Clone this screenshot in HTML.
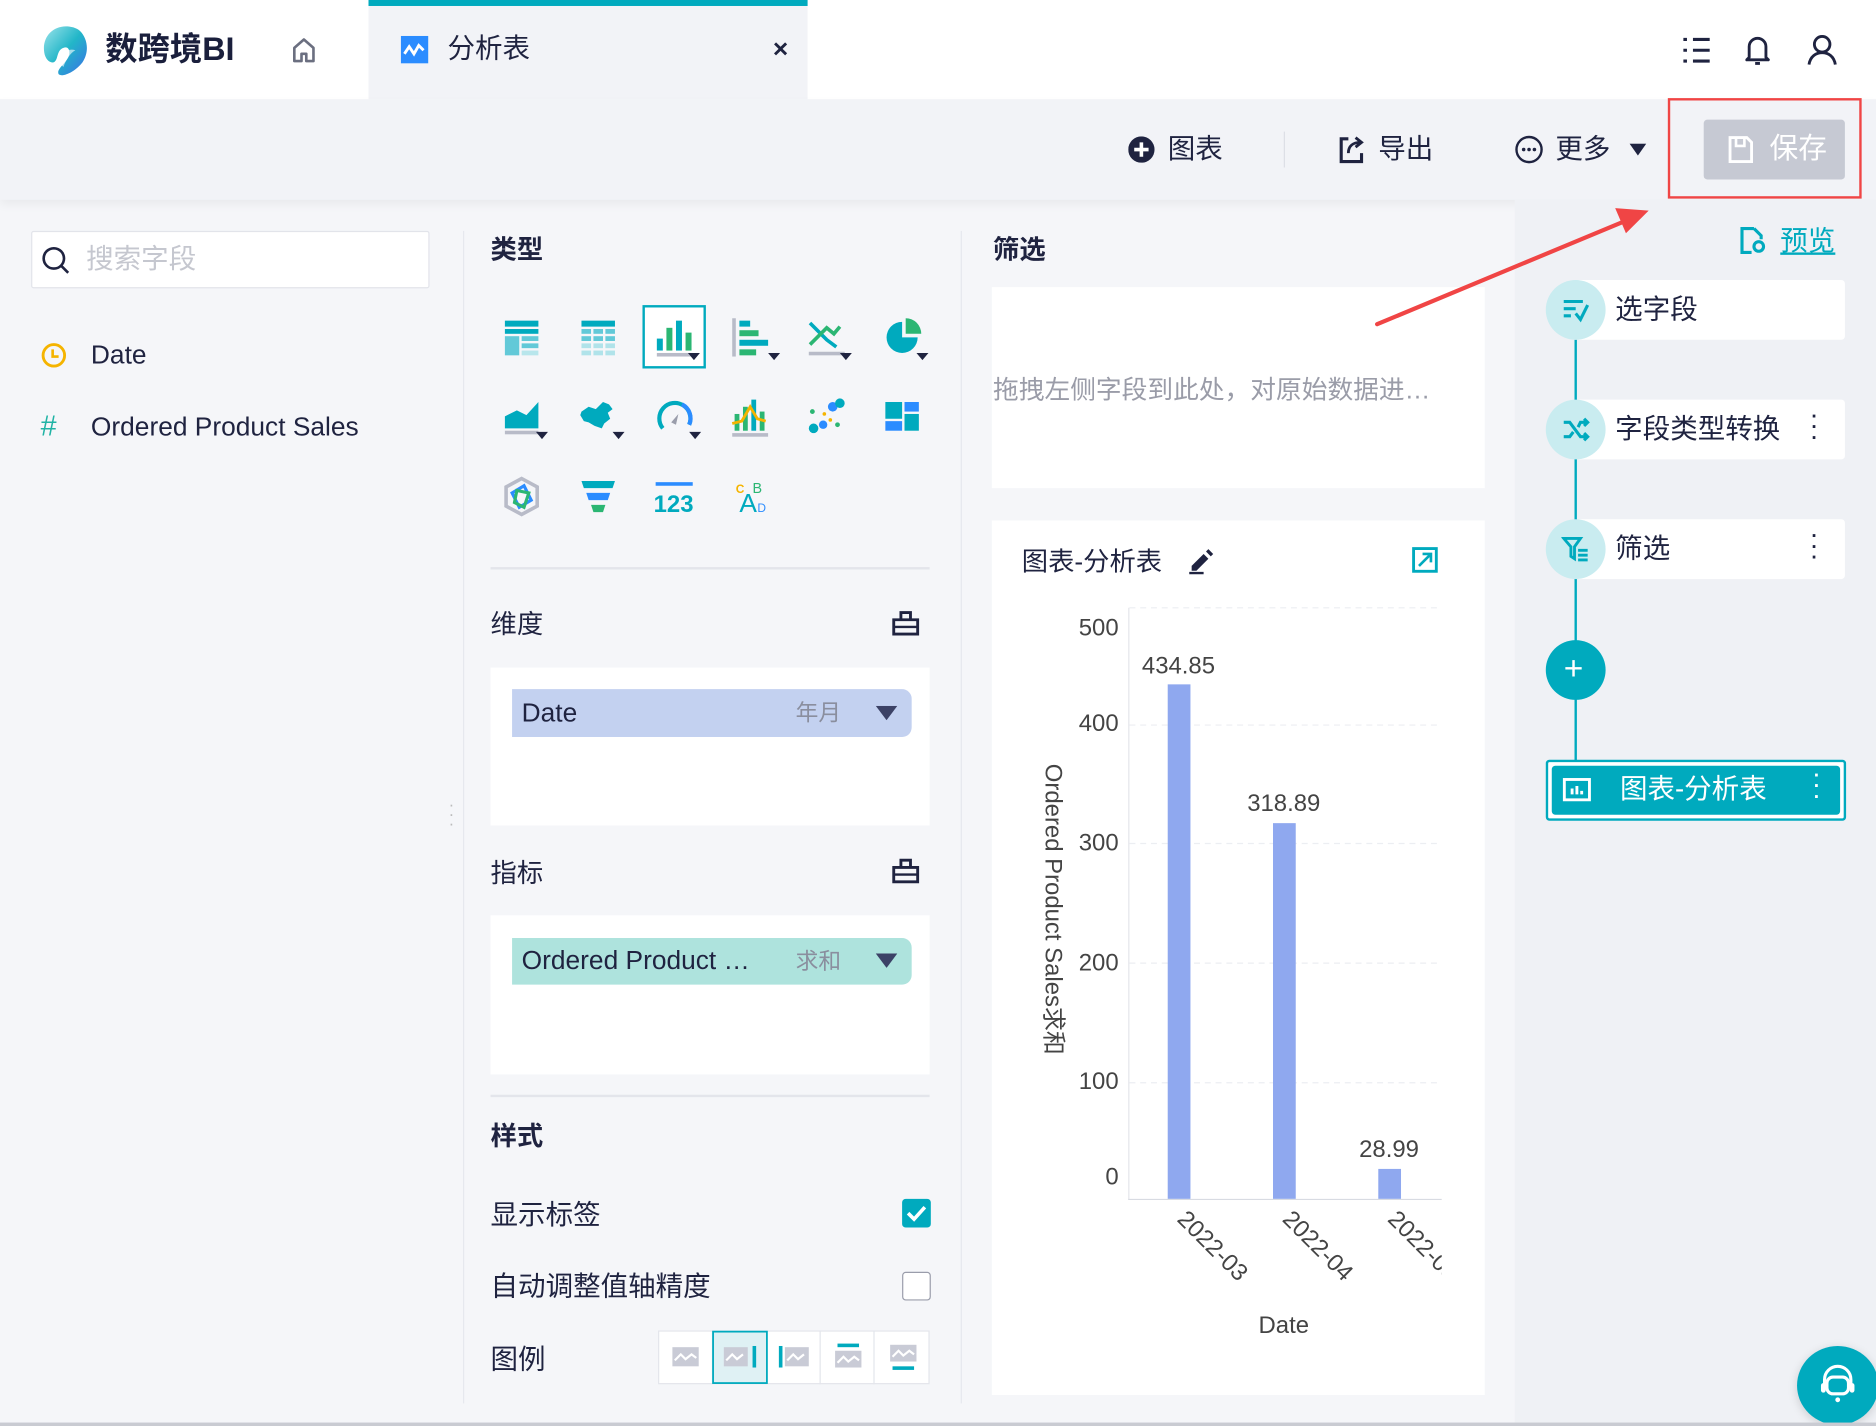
<!DOCTYPE html>
<html><head><meta charset="utf-8"><style>
*{box-sizing:border-box;margin:0;padding:0}
html,body{width:1876px;height:1426px;overflow:hidden;background:#f5f6f9}
body{font-family:"Liberation Sans","Noto Sans CJK SC",sans-serif;color:#1f2340}
#w{position:absolute;left:0;top:0;width:1568px;height:1192px;transform:scale(1.19643);transform-origin:0 0;background:#f5f6f9;overflow:hidden}
.a{position:absolute}
.t{position:absolute;white-space:nowrap;line-height:1}
</style></head><body><div id="w">
<!-- top bar -->
<div class="a" style="left:0;top:0;width:1568px;height:83px;background:#fff"></div>
<svg class="a" style="left:33px;top:20px" width="46" height="44" viewBox="0 0 46 44"><defs><linearGradient id="lg" x1="0" y1="0" x2="1" y2="1"><stop offset="0" stop-color="#9be3ea"/><stop offset=".5" stop-color="#22b6c8"/><stop offset="1" stop-color="#3a6fe6"/></linearGradient></defs><path d="M22 2C10 2 2 12 4 24c1 6 5 9 8 8 4-2 2-10 8-12 5-2 6 4 4 8-3 6-10 10-8 14 3 3 14-2 20-10 6-9 4-20-2-26-3-3-8-4-12-4z" fill="url(#lg)"/><path d="M14 30c4-6 10-10 16-8-4 2-8 8-10 14z" fill="#fff" opacity=".6"/></svg>
<div class="t" style="left:88px;top:28px;font-size:27px;font-weight:bold;color:#1a1f3c">数跨境BI</div>
<svg class="a" style="left:242px;top:30px" width="24" height="24" viewBox="0 0 24 24"><path d="M4 21V10l8-7 8 7v11h-6v-6h-4v6z" fill="none" stroke="#6b6f80" stroke-width="2.2" stroke-linejoin="round"/></svg>
<div class="a" style="left:308px;top:0;width:367px;height:83px;background:#f2f3f7"></div>
<div class="a" style="left:308px;top:0;width:367px;height:5px;background:#00aabe"></div>
<svg class="a" style="left:335px;top:30px" width="23" height="23" viewBox="0 0 23 23"><rect width="23" height="23" fill="#2b8cff"/><path d="M3 15l4-6 4 6 4-7 4 4" fill="none" stroke="#fff" stroke-width="2.4"/></svg>
<div class="t" style="left:374px;top:29px;font-size:23px">分析表</div>
<div class="t" style="left:646px;top:30px;font-size:22px;font-weight:bold">×</div>
<svg class="a" style="left:1405px;top:29px" width="26" height="26" viewBox="0 0 26 26"><g stroke="#1f2340" stroke-width="2.6"><path d="M10 4h14M10 13h14M10 22h14"/><path d="M2 4h3M2 13h3M2 22h3"/></g></svg>
<svg class="a" style="left:1457px;top:28px" width="24" height="28" viewBox="0 0 24 28"><path d="M5 20V11a7 7 0 0114 0v9l2 2H3z" fill="none" stroke="#1f2340" stroke-width="2.4" stroke-linejoin="round"/><path d="M10 25h4" stroke="#1f2340" stroke-width="2.4"/></svg>
<svg class="a" style="left:1510px;top:28px" width="26" height="28" viewBox="0 0 26 28"><circle cx="13" cy="9" r="6.5" fill="none" stroke="#1f2340" stroke-width="2.4"/><path d="M2 26c1-7 6-10 11-10s10 3 11 10" fill="none" stroke="#1f2340" stroke-width="2.4"/></svg>
<!-- toolbar -->
<div class="a" style="left:0;top:83px;width:1568px;height:84px;background:#f2f3f7;box-shadow:0 4px 8px rgba(0,0,0,.05)"></div>
<svg class="a" style="left:943px;top:114px" width="22" height="22" viewBox="0 0 22 22"><circle cx="11" cy="11" r="11" fill="#1f2340"/><path d="M11 5v12M5 11h12" stroke="#fff" stroke-width="3"/></svg>
<div class="t" style="left:976px;top:113px;font-size:23px">图表</div>
<div class="a" style="left:1073px;top:110px;width:1px;height:30px;background:#dcdee6"></div>
<svg class="a" style="left:1118px;top:113px" width="24" height="24" viewBox="0 0 24 24"><path d="M9 3H3v19h17v-7" fill="none" stroke="#1f2340" stroke-width="2.6"/><path d="M9 15c0-6 4-9 10-9M15 2l5 4-5 4" fill="none" stroke="#1f2340" stroke-width="2.4"/></svg>
<div class="t" style="left:1152px;top:113px;font-size:23px">导出</div>
<svg class="a" style="left:1266px;top:113px" width="24" height="24" viewBox="0 0 24 24"><circle cx="12" cy="12" r="10.5" fill="none" stroke="#1f2340" stroke-width="2"/><circle cx="7.5" cy="12" r="1.5" fill="#1f2340"/><circle cx="12" cy="12" r="1.5" fill="#1f2340"/><circle cx="16.5" cy="12" r="1.5" fill="#1f2340"/></svg>
<div class="t" style="left:1300px;top:113px;font-size:23px">更多</div>
<svg class="a" style="left:1362px;top:120px" width="14" height="10"><path d="M0 0h14L7 10z" fill="#1f2340"/></svg>
<div class="a" style="left:1424px;top:100px;width:118px;height:50px;background:#c6c9d3;border-radius:3px"></div>
<svg class="a" style="left:1444px;top:113px" width="22" height="24" viewBox="0 0 22 24"><path d="M2 2h14l4 4v16H2z" fill="none" stroke="#fff" stroke-width="2.4"/><path d="M7 3v6h7V3" fill="none" stroke="#fff" stroke-width="2.2"/></svg>
<div class="t" style="left:1479px;top:113px;font-size:24px;color:#fff">保存</div>
<div class="a" style="left:1394px;top:82px;width:162px;height:84px;border:2.5px solid #f04545"></div>
<!-- left panel -->
<div class="a" style="left:26px;top:193px;width:333px;height:48px;background:#fff;border:1.5px solid #e2e4ea;border-radius:2px"></div>
<svg class="a" style="left:34px;top:205px" width="26" height="26" viewBox="0 0 26 26"><circle cx="11" cy="11" r="8.5" fill="none" stroke="#1f2340" stroke-width="2.2"/><path d="M17 17l6 6" stroke="#1f2340" stroke-width="2.2"/></svg>
<div class="t" style="left:72px;top:205px;font-size:23px;color:#c5c7cf">搜索字段</div>
<svg class="a" style="left:34px;top:286px" width="22" height="22" viewBox="0 0 22 22"><circle cx="11" cy="11" r="9" fill="none" stroke="#f5b400" stroke-width="2.4"/><path d="M10 6v6h5" fill="none" stroke="#f5b400" stroke-width="2.2"/></svg>
<div class="t" style="left:76px;top:286px;font-size:22px">Date</div>
<div class="t" style="left:34px;top:345px;font-size:24px;color:#20b3a5">#</div>
<div class="t" style="left:76px;top:346px;font-size:22px">Ordered Product Sales</div>
<div class="a" style="left:387px;top:193px;width:1px;height:980px;background:#e6e8ee"></div>
<div class="t" style="left:375px;top:668px;font-size:14px;color:#bbb;line-height:8px;width:4px">·<br>·<br>·</div>
<!-- middle config -->
<div class="t" style="left:410px;top:198px;font-size:22px;font-weight:bold">类型</div>
<div class="a" style="left:537px;top:255px;width:53px;height:53px;background:#fff;border:2px solid #00aabe"></div>
<svg class="a" style="left:400px;top:250px" width="400" height="190" viewBox="0 0 400 190">
<g transform="translate(22,18)"><rect x="0" y="0" width="28" height="5" fill="#00aabe"/><rect x="0" y="7" width="28" height="4" fill="#00aabe"/><rect x="0" y="13" width="12" height="16" fill="#62c9d8"/><rect x="14" y="13" width="14" height="4" fill="#62c9d8"/><rect x="14" y="19" width="14" height="4" fill="#62c9d8"/><rect x="14" y="25" width="14" height="4" fill="#b8e6ec"/></g>
<g transform="translate(86,18)"><rect x="0" y="0" width="28" height="5" fill="#00aabe"/><g fill="#62c9d8"><rect x="0" y="7" width="8" height="4"/><rect x="10" y="7" width="8" height="4"/><rect x="20" y="7" width="8" height="4"/><rect x="0" y="13" width="8" height="4"/><rect x="10" y="13" width="8" height="4"/><rect x="20" y="13" width="8" height="4"/></g><g fill="#b0e3ea"><rect x="0" y="19" width="8" height="4"/><rect x="10" y="19" width="8" height="4"/><rect x="20" y="19" width="8" height="4"/><rect x="0" y="25" width="8" height="4"/><rect x="10" y="25" width="8" height="4"/><rect x="20" y="25" width="8" height="4"/></g></g>
<g transform="translate(149,16)"><rect x="0" y="17" width="5" height="10" fill="#00aabe"/><rect x="8" y="8" width="5" height="19" fill="#2bb673"/><rect x="16" y="2" width="5" height="25" fill="#00aabe"/><rect x="24" y="12" width="5" height="15" fill="#2bb673"/><rect x="0" y="29" width="30" height="3" fill="#b8bbc8"/><path d="M26 29h10l-5 6z" fill="#1f2340"/></g>
<g transform="translate(212,16)"><rect x="0" y="0" width="3" height="32" fill="#b8bbc8"/><rect x="6" y="2" width="9" height="5" fill="#00aabe"/><rect x="6" y="10" width="16" height="5" fill="#2bb673"/><rect x="6" y="18" width="24" height="5" fill="#00aabe"/><rect x="6" y="26" width="14" height="5" fill="#2bb673"/><path d="M30 29h10l-5 6z" fill="#1f2340"/></g>
<g transform="translate(276,16)"><path d="M1 4l14 14 8 6" fill="none" stroke="#00aabe" stroke-width="3"/><path d="M1 22l14-14 6 5 5-6" fill="none" stroke="#2bb673" stroke-width="3"/><rect x="0" y="28" width="30" height="3" fill="#b8bbc8"/><path d="M26 29h10l-5 6z" fill="#1f2340"/></g>
<g transform="translate(340,16)"><path d="M14 3A13 13 0 1 0 27 16H14z" fill="#00aabe"/><path d="M17 0a13 13 0 0 1 13 13H17z" fill="#2bb673"/><path d="M26 29h10l-5 6z" fill="#1f2340"/></g>
<g transform="translate(22,84)"><path d="M0 14l10-5 8 4 10-11v22H0z" fill="#00aabe"/><rect x="0" y="26" width="28" height="3" fill="#b8bbc8"/><path d="M26 27h10l-5 6z" fill="#1f2340"/></g>
<g transform="translate(86,84)"><path d="M0 10l6-4 6 2 6-6 5 2 3 4-4 3 2 5-5 4-2 4-6-2-5-3-4-1-3-5z" fill="#00aabe"/><path d="M26 27h10l-5 6z" fill="#1f2340"/></g>
<g transform="translate(150,84)"><path d="M4 24A13 13 0 1 1 26 21" fill="none" stroke="#00aabe" stroke-width="3.5"/><path d="M20 4A13 13 0 0 1 26 21" fill="none" stroke="#2b8cff" stroke-width="3.5"/><path d="M11 19l6-7-2 9z" fill="#9a9dab"/><path d="M26 27h10l-5 6z" fill="#1f2340"/></g>
<g transform="translate(212,84)"><rect x="2" y="12" width="4" height="14" fill="#2bb673"/><rect x="9" y="6" width="4" height="20" fill="#2bb673"/><rect x="16" y="0" width="4" height="26" fill="#00aabe"/><rect x="23" y="10" width="4" height="16" fill="#2bb673"/><path d="M0 20l8-2 7-12 6 10 7 2" fill="none" stroke="#f5b400" stroke-width="2.4"/><rect x="0" y="28" width="30" height="3" fill="#b8bbc8"/></g>
<g transform="translate(276,84)"><circle cx="4" cy="24" r="4" fill="#00aabe"/><circle cx="12" cy="21" r="3.5" fill="#2b8cff"/><circle cx="20" cy="6" r="4" fill="#2b8cff"/><circle cx="26" cy="3" r="4" fill="#00aabe"/><circle cx="3" cy="10" r="2" fill="#2bb673"/><circle cx="13" cy="12" r="1.5" fill="#f5b400"/><circle cx="18" cy="17" r="1.5" fill="#f5b400"/><circle cx="24" cy="21" r="2" fill="#2bb673"/></g>
<g transform="translate(340,86)"><rect x="0" y="0" width="14" height="14" fill="#00aabe"/><rect x="16" y="0" width="12" height="8" fill="#2b8cff"/><rect x="0" y="16" width="14" height="8" fill="#2b8cff"/><rect x="16" y="10" width="12" height="14" fill="#00aabe"/></g>
<g transform="translate(22,150)"><path d="M14 0l13 7v16l-13 7-13-7V7z" fill="none" stroke="#b8bbc8" stroke-width="3"/><path d="M6 12l10-6 6 12-10 6z" fill="none" stroke="#2b8cff" stroke-width="2.6"/><path d="M10 10l10 2-4 12-8-4z" fill="none" stroke="#2bb673" stroke-width="2.6"/></g>
<g transform="translate(86,152)"><path d="M0 0h28l-2 6H2z" fill="#00aabe"/><path d="M4 10h20l-2 6H6z" fill="#2b8cff"/><path d="M8 20h12l-2 6h-8z" fill="#2bb673"/></g>
<text x="163" y="178" font-family="Liberation Sans" font-weight="bold" font-size="20" fill="#00aabe" text-anchor="middle">123</text><rect x="148" y="153" width="31" height="3" fill="#2b8cff"/>
<text x="215" y="162" font-family="Liberation Sans" font-weight="bold" font-size="10" fill="#f5b400">C</text><text x="218" y="178" font-family="Liberation Sans" font-size="22" fill="#00aabe">A</text><text x="229" y="162" font-family="Liberation Sans" font-size="12" fill="#2bb673">B</text><text x="233" y="178" font-family="Liberation Sans" font-size="10" fill="#2b8cff">D</text>
</svg>
<div class="a" style="left:410px;top:474px;width:367px;height:1.5px;background:#e3e5eb"></div>
<div class="t" style="left:410px;top:511px;font-size:22px">维度</div>
<svg class="a" style="left:745px;top:509px" width="24" height="24" viewBox="0 0 24 24"><path d="M2 9h20v12H2zM8 9V3h8v6" fill="none" stroke="#1f2340" stroke-width="2.4"/><path d="M2 15h20" stroke="#1f2340" stroke-width="2"/></svg>
<div class="a" style="left:410px;top:558px;width:367px;height:132px;background:#fff"></div>
<div class="a" style="left:428px;top:576px;width:334px;height:40px;background:#c3d1f0;border-radius:0 8px 8px 0"></div>
<div class="t" style="left:436px;top:585px;font-size:22px">Date</div>
<div class="t" style="left:665px;top:587px;font-size:19px;color:#8a8e9e">年月</div>
<svg class="a" style="left:732px;top:590px" width="18" height="12"><path d="M0 0h18L9 12z" fill="#3c4266"/></svg>
<div class="t" style="left:410px;top:719px;font-size:22px">指标</div>
<svg class="a" style="left:745px;top:716px" width="24" height="24" viewBox="0 0 24 24"><path d="M2 9h20v12H2zM8 9V3h8v6" fill="none" stroke="#1f2340" stroke-width="2.4"/><path d="M2 15h20" stroke="#1f2340" stroke-width="2"/></svg>
<div class="a" style="left:410px;top:765px;width:367px;height:133px;background:#fff"></div>
<div class="a" style="left:428px;top:784px;width:334px;height:39px;background:#aee3dd;border-radius:0 8px 8px 0"></div>
<div class="t" style="left:436px;top:792px;font-size:22px">Ordered Product …</div>
<div class="t" style="left:665px;top:795px;font-size:19px;color:#8a8e9e">求和</div>
<svg class="a" style="left:732px;top:797px" width="18" height="12"><path d="M0 0h18L9 12z" fill="#3c4266"/></svg>
<div class="a" style="left:410px;top:915px;width:367px;height:1.5px;background:#e3e5eb"></div>
<div class="t" style="left:410px;top:939px;font-size:22px;font-weight:bold">样式</div>
<div class="t" style="left:410px;top:1004px;font-size:23px">显示标签</div>
<div class="a" style="left:754px;top:1002px;width:24px;height:24px;background:#00aabe;border-radius:3px"></div>
<svg class="a" style="left:754px;top:1002px" width="24" height="24"><path d="M5 12l5 5 9-10" fill="none" stroke="#fff" stroke-width="3"/></svg>
<div class="t" style="left:410px;top:1064px;font-size:23px">自动调整值轴精度</div>
<div class="a" style="left:754px;top:1063px;width:24px;height:24px;background:#fff;border:1.5px solid #9a9dab;border-radius:3px"></div>
<div class="t" style="left:410px;top:1125px;font-size:23px">图例</div>
<svg class="a" style="left:550px;top:1112px" width="228" height="46" viewBox="0 0 228 46">
<rect x=".5" y=".5" width="226" height="44" fill="#fff" stroke="#e3e5eb"/>
<g stroke="#e3e5eb"><path d="M45.5 0v45M90.5 0v45M135.5 0v45M180.5 0v45"/></g>
<rect x="46" y="1" width="45" height="43" fill="#dff1f4" stroke="#00aabe" stroke-width="1.5"/>
<g fill="#c9cbd6"><rect x="12" y="14" width="22" height="16"/><rect x="55" y="14" width="20" height="16"/><rect x="106" y="14" width="20" height="16"/><rect x="148" y="17" width="22" height="14"/><rect x="194" y="12" width="22" height="14"/></g>
<g fill="none" stroke="#fff" stroke-width="1.8"><path d="M14 25l5-5 4 4 5-4 4 3"/><path d="M57 25l5-5 4 4 5-4"/><path d="M108 25l5-5 4 4 5-4"/><path d="M150 27l5-5 4 4 5-4 4 3"/><path d="M196 22l5-5 4 4 5-4 4 3"/></g>
<g fill="#00aabe"><rect x="79" y="13" width="3" height="18"/><rect x="101" y="13" width="3" height="18"/><rect x="150" y="11" width="18" height="3"/><rect x="196" y="30" width="18" height="3"/></g>
</svg>
<div class="a" style="left:803px;top:193px;width:1px;height:980px;background:#e6e8ee"></div>
<!-- filter -->
<div class="t" style="left:830px;top:198px;font-size:22px;font-weight:bold">筛选</div>
<div class="a" style="left:829px;top:240px;width:412px;height:168px;background:#fff"></div>
<div class="t" style="left:830px;top:316px;font-size:21.5px;color:#9a9ca8">拖拽左侧字段到此处，对原始数据进…</div>
<!-- chart -->
<div class="a" style="left:829px;top:435px;width:412px;height:731px;background:#fff"></div>
<div class="t" style="left:854px;top:459px;font-size:22px">图表-分析表</div>
<svg class="a" style="left:992px;top:457px" width="24" height="24" viewBox="0 0 24 24"><path d="M4 16l10-10 4 4-10 10H4z" fill="#1f2340"/><path d="M16 4l2-2 4 4-2 2z" fill="#1f2340"/><path d="M2 22h12" stroke="#1f2340" stroke-width="2"/></svg>
<svg class="a" style="left:1180px;top:457px" width="22" height="22" viewBox="0 0 22 22"><rect x="1.5" y="1.5" width="19" height="19" fill="none" stroke="#00aabe" stroke-width="2.4"/><path d="M6 16l9-9M9 6h7v7" fill="none" stroke="#00aabe" stroke-width="2.2"/></svg>
<svg class="a" style="left:829px;top:480px" width="412" height="650" viewBox="829 480 412 650">
<g stroke="#eceef2" stroke-dasharray="5 4" stroke-width="1"><path d="M944 508H1205M944 606H1205M944 705H1205M944 805H1205M944 905H1205"/></g>
<path d="M943.5 508V1003" stroke="#e3e5ea"/><path d="M943 1002.5H1205" stroke="#d8dbe2"/>
<g font-family="Liberation Sans" font-size="20" fill="#444" text-anchor="end"><text x="935" y="531">500</text><text x="935" y="611">400</text><text x="935" y="711">300</text><text x="935" y="811">200</text><text x="935" y="910">100</text><text x="935" y="990">0</text></g>
<g fill="#8fa8ef"><rect x="976" y="572" width="19" height="430"/><rect x="1064" y="688" width="19" height="314"/><rect x="1152" y="977" width="19" height="25"/></g>
<g font-family="Liberation Sans" font-size="20" fill="#444" text-anchor="middle"><text x="985" y="563">434.85</text><text x="1073" y="678">318.89</text><text x="1161" y="967">28.99</text></g>
<defs><clipPath id="cp"><rect x="829" y="480" width="376" height="650"/></clipPath></defs>
<g clip-path="url(#cp)" font-family="Liberation Sans" font-size="20" fill="#444"><text transform="translate(983,1020) rotate(45)">2022-03</text><text transform="translate(1071,1020) rotate(45)">2022-04</text><text transform="translate(1159,1020) rotate(45)">2022-05</text></g>
<text x="1073" y="1114" font-family="Liberation Sans" font-size="20" fill="#444" text-anchor="middle">Date</text>
<text transform="translate(874,760) rotate(90)" font-family="Liberation Sans,Noto Sans CJK SC" font-size="20" fill="#444" text-anchor="middle">Ordered Product Sales求和</text>
</svg>
<!-- right panel -->
<div class="a" style="left:1266px;top:167px;width:302px;height:1025px;background:#eff1f5"></div>
<svg class="a" style="left:1453px;top:189px" width="24" height="24" viewBox="0 0 24 24"><path d="M13 2H3v20h8M13 2l6 6v3" fill="none" stroke="#00aabe" stroke-width="2.6"/><circle cx="17" cy="17" r="4" fill="none" stroke="#00aabe" stroke-width="2.6"/></svg>
<div class="t" style="left:1488px;top:190px;font-size:23px;color:#00aabe;text-decoration:underline">预览</div>
<div class="a" style="left:1316px;top:284px;width:2px;height:352px;background:#00aabe"></div>
<div class="a" style="left:1317px;top:234px;width:225px;height:50px;background:#fff;border-radius:3px"></div>
<div class="a" style="left:1292px;top:234px;width:50px;height:50px;background:#c9ecf0;border-radius:50%"></div>
<svg class="a" style="left:1305px;top:248px" width="24" height="22" viewBox="0 0 24 22"><path d="M2 4h16M2 10h10M2 16h6" stroke="#00aabe" stroke-width="2.6"/><path d="M12 14l4 5 6-12" fill="none" stroke="#00aabe" stroke-width="2.6"/></svg>
<div class="t" style="left:1350px;top:247px;font-size:23px">选字段</div>
<div class="a" style="left:1317px;top:334px;width:225px;height:50px;background:#fff;border-radius:3px"></div>
<div class="a" style="left:1292px;top:334px;width:50px;height:50px;background:#c9ecf0;border-radius:50%"></div>
<svg class="a" style="left:1305px;top:347px" width="24" height="24" viewBox="0 0 24 24"><path d="M2 6h5l9 12h6M2 18h5l3-4M14 10l2-4h6M19 3l3 3-3 3M19 15l3 3-3 3" fill="none" stroke="#00aabe" stroke-width="2.6"/></svg>
<div class="t" style="left:1350px;top:347px;font-size:23px">字段类型转换</div>
<div class="t" style="left:1514px;top:344px;font-size:16px;font-weight:bold;line-height:9px">·<br>·<br>·</div>
<div class="a" style="left:1317px;top:434px;width:225px;height:50px;background:#fff;border-radius:3px"></div>
<div class="a" style="left:1292px;top:434px;width:50px;height:50px;background:#c9ecf0;border-radius:50%"></div>
<svg class="a" style="left:1305px;top:447px" width="24" height="24" viewBox="0 0 24 24"><path d="M2 3h14l-5 7v10l-3-2v-8z" fill="none" stroke="#00aabe" stroke-width="2.4"/><path d="M14 13h8M14 17h8M14 21h8" stroke="#00aabe" stroke-width="2.4"/></svg>
<div class="t" style="left:1350px;top:447px;font-size:23px">筛选</div>
<div class="t" style="left:1514px;top:444px;font-size:16px;font-weight:bold;line-height:9px">·<br>·<br>·</div>
<div class="a" style="left:1292px;top:535px;width:50px;height:50px;background:#00aabe;border-radius:50%"></div>
<div class="t" style="left:1307px;top:545px;font-size:28px;color:#fff">+</div>
<div class="a" style="left:1292px;top:635px;width:251px;height:51px;border:2px solid #00aabe;border-radius:3px;background:#fff"></div>
<div class="a" style="left:1297px;top:640px;width:241px;height:41px;background:#00aabe;border-radius:3px"></div>
<svg class="a" style="left:1306px;top:650px" width="24" height="20" viewBox="0 0 24 20"><rect x="1.5" y="1.5" width="21" height="17" fill="none" stroke="#fff" stroke-width="2.4"/><path d="M8 14V9M12 14V7M16 14v-3" stroke="#fff" stroke-width="2.4"/></svg>
<div class="t" style="left:1354px;top:648px;font-size:23px;color:#fff">图表-分析表</div>
<div class="t" style="left:1516px;top:644px;font-size:16px;font-weight:bold;line-height:9px;color:#fff">·<br>·<br>·</div>
<div class="a" style="left:1502px;top:1125px;width:68px;height:66px;background:#00aabe;border-radius:50%;box-shadow:0 2px 8px rgba(0,0,0,.15)"></div>
<svg class="a" style="left:1518px;top:1140px" width="36" height="36" viewBox="0 0 36 36"><path d="M7 19v-6a11 11 0 0122 0v6" fill="none" stroke="#fff" stroke-width="2.6"/><rect x="9" y="11" width="18" height="14" rx="5" fill="none" stroke="#fff" stroke-width="2.6"/><rect x="4" y="16" width="4" height="8" rx="2" fill="#fff"/><rect x="28" y="16" width="4" height="8" rx="2" fill="#fff"/><circle cx="18" cy="30" r="2" fill="#fff"/></svg>
<div class="a" style="left:0;top:1189px;width:1568px;height:3px;background:#c9cbd2"></div>
<!-- red arrow on top -->
<svg class="a" style="left:0;top:0" width="1568" height="300"><path d="M1151 271L1360 184" stroke="#f04545" stroke-width="3.5" stroke-linecap="round"/><path d="M1378 176L1350 174L1359 195z" fill="#f04545"/></svg>
</div></body></html>
